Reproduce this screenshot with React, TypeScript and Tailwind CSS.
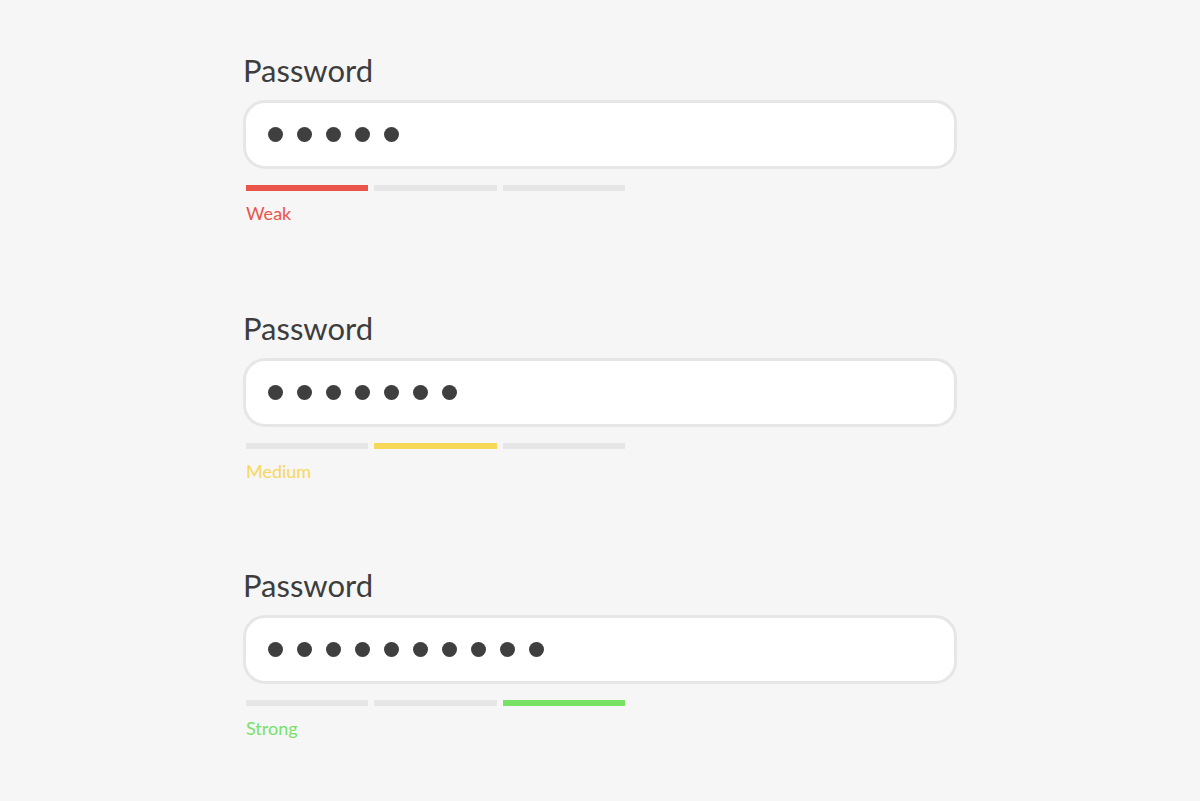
const levels = [
  { dots: 5, label: "Weak", active: 0, bar: "bg-[#eb5449]", text: "text-[#eb5449]" },
  { dots: 7, label: "Medium", active: 1, bar: "bg-[#f8d85a]", text: "text-[#f8d85a]" },
  { dots: 10, label: "Strong", active: 2, bar: "bg-[#78e265]", text: "text-[#78e265]" },
]

function PasswordField({ dots, label, active, bar, text }: (typeof levels)[number]) {
  return (
    <div className="h-[257.5px]">
      <div className="text-[31px] leading-[38px] text-[#3d3d3d]">Password</div>
      <div className="mt-[11px] flex h-[69px] w-[714px] items-center gap-[14px] rounded-[22px] border-[3px] border-[#e6e6e6] bg-white pl-[22px]">
        {Array.from({ length: dots }).map((_, i) => (
          <span key={i} className="h-[15px] w-[15px] rounded-full bg-[#3f3f3f]" />
        ))}
      </div>
      <div className="mt-[16px] ml-[3px] flex w-[379px] gap-[6px]">
        {[0, 1, 2].map((i) => (
          <div key={i} className={`h-[6px] flex-1 ${i === active ? bar : "bg-[#e6e6e6]"}`} />
        ))}
      </div>
      <div className={`mt-[11px] ml-[3px] text-[18px] leading-[22px] ${text}`}>{label}</div>
    </div>
  )
}

export default function App() {
  return (
    <div className="min-h-[801px] bg-[#f6f6f6] pl-[243px] pt-[51px]" style={{ fontFamily: "Lato, 'Open Sans', sans-serif" }}>
      {levels.map((l) => (
        <PasswordField key={l.label} {...l} />
      ))}
    </div>
  )
}
